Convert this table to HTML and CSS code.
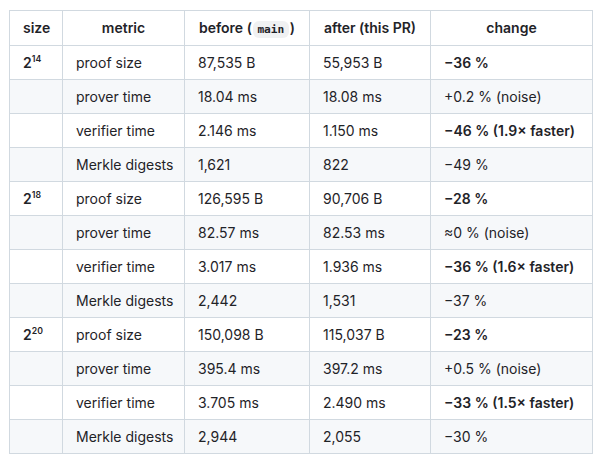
FILE: index.html
```html
<!DOCTYPE html>
<html>
<head>
<meta charset="utf-8">
<link rel="stylesheet" href="styles.css">
</head>
<body>
<table class="bench">
  <colgroup>
    <col class="c-size"><col class="c-metric"><col class="c-before"><col class="c-after"><col class="c-change">
  </colgroup>
  <thead>
    <tr><th>size</th><th>metric</th><th>before (<code>main</code>)</th><th>after (this PR)</th><th>change</th></tr>
  </thead>
  <tbody>
    <tr><td><b>2<sup>14</sup></b></td><td>proof size</td><td>87,535 B</td><td>55,953 B</td><td><b>−36 %</b></td></tr>
    <tr><td></td><td>prover time</td><td>18.04 ms</td><td>18.08 ms</td><td>+0.2 % (noise)</td></tr>
    <tr><td></td><td>verifier time</td><td>2.146 ms</td><td>1.150 ms</td><td><b>−46 % (1.9× faster)</b></td></tr>
    <tr><td></td><td>Merkle digests</td><td>1,621</td><td>822</td><td>−49 %</td></tr>
    <tr><td><b>2<sup>18</sup></b></td><td>proof size</td><td>126,595 B</td><td>90,706 B</td><td><b>−28 %</b></td></tr>
    <tr><td></td><td>prover time</td><td>82.57 ms</td><td>82.53 ms</td><td>≈0 % (noise)</td></tr>
    <tr><td></td><td>verifier time</td><td>3.017 ms</td><td>1.936 ms</td><td><b>−36 % (1.6× faster)</b></td></tr>
    <tr><td></td><td>Merkle digests</td><td>2,442</td><td>1,531</td><td>−37 %</td></tr>
    <tr><td><b>2<sup>20</sup></b></td><td>proof size</td><td>150,098 B</td><td>115,037 B</td><td><b>−23 %</b></td></tr>
    <tr><td></td><td>prover time</td><td>395.4 ms</td><td>397.2 ms</td><td>+0.5 % (noise)</td></tr>
    <tr><td></td><td>verifier time</td><td>3.705 ms</td><td>2.490 ms</td><td><b>−33 % (1.5× faster)</b></td></tr>
    <tr><td></td><td>Merkle digests</td><td>2,944</td><td>2,055</td><td>−30 %</td></tr>
  </tbody>
</table>
</body>
</html>
```
FILE: styles.css
```css
html, body {
  margin: 0;
  padding: 0;
  background: #ffffff;
}
body {
  font-family: Inter, "Liberation Sans", Arial, sans-serif;
  font-size: 14px;
  line-height: 21px;
  color: #1f2328;
}
.bench {
  border-collapse: collapse;
  table-layout: fixed;
  width: 583px;
  margin: 10px 0 0 9px;
}
.c-size { width: 53px; }
.c-metric { width: 122px; }
.c-before { width: 125px; }
.c-after { width: 121px; }
.c-change { width: 162px; }
.bench th, .bench td {
  border: 1px solid #d1d9e0;
  padding: 6px 13px;
  height: 21px;
  white-space: nowrap;
}
.bench th {
  font-weight: 600;
  text-align: center;
  padding-bottom: 7px;
}
.bench td {
  text-align: left;
}
.bench tbody tr:nth-child(2n) {
  background: #f6f8fa;
}
.bench b {
  font-weight: 600;
}
.bench sup {
  font-size: 62%;
  line-height: 0;
  position: relative;
  vertical-align: baseline;
  top: -0.75em;
}
.bench code {
  font-family: "DejaVu Sans Mono", "Liberation Mono", monospace;
  font-size: 80%;
  font-weight: 600;
  line-height: 1;
  padding: 0.2em 0.4em;
  margin: 0 1px;
  background: rgba(129, 139, 152, 0.12);
  border-radius: 6px;
}
```
